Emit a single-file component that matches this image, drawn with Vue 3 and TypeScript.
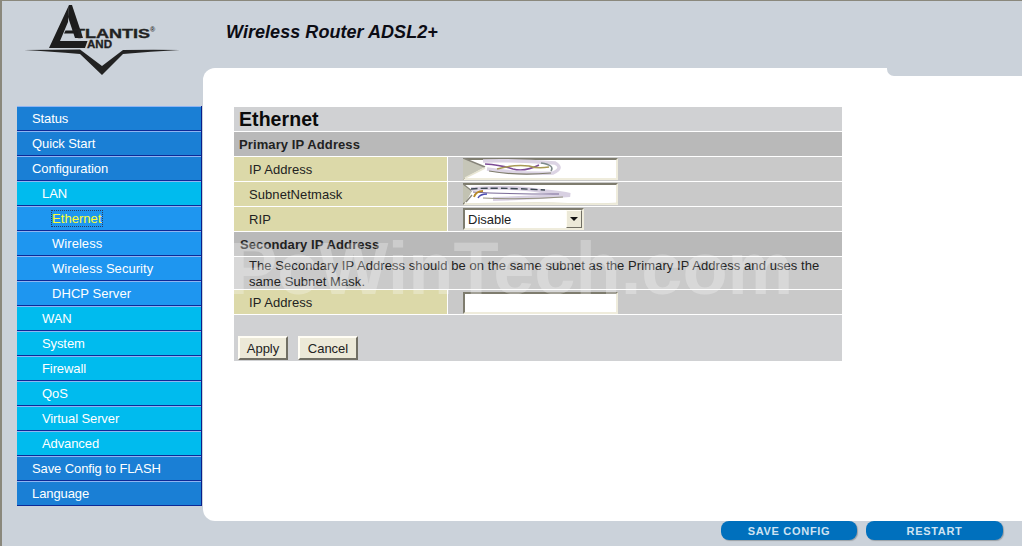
<script setup lang="ts">
interface MenuItem { label: string; level: 'top' | 'mid' | 'sub'; active?: boolean }
const menu: MenuItem[] = [
  { label: 'Status', level: 'top' },
  { label: 'Quick Start', level: 'top' },
  { label: 'Configuration', level: 'top' },
  { label: 'LAN', level: 'mid' },
  { label: 'Ethernet', level: 'sub', active: true },
  { label: 'Wireless', level: 'sub' },
  { label: 'Wireless Security', level: 'sub' },
  { label: 'DHCP Server', level: 'sub' },
  { label: 'WAN', level: 'mid' },
  { label: 'System', level: 'mid' },
  { label: 'Firewall', level: 'mid' },
  { label: 'QoS', level: 'mid' },
  { label: 'Virtual Server', level: 'mid' },
  { label: 'Advanced', level: 'mid' },
  { label: 'Save Config to FLASH', level: 'top' },
  { label: 'Language', level: 'top' }
]
</script>

<template>
  <div class="page">
    <header class="header">
      <svg class="logo" width="160" height="72" viewBox="24 4 160 72" aria-label="Atlantis Land logo">
        <path d="M69 5 L49 48 L85 48 L87.5 41 L60 41 L68 22 Z" fill="#1d1d1d" />
        <path d="M69 5 L72 5 L83 38 L75 38 L73.5 33.5 L64 33.5 L65.5 30.5 L72.5 30.5 L68 17 Z" fill="#1d1d1d" />
        <path d="M24 50 Q55 49.5 80 49.5 L102 66 L123 50 Q155 49.5 180 50 Q150 51.5 123 54 L102 75 L80 54 Q50 51.5 24 50 Z" fill="#222" />
        <text x="74" y="38" class="logo-main" textLength="76" lengthAdjust="spacingAndGlyphs">TLANTIS</text>
        <text x="150" y="32" class="logo-reg">®</text>
        <text x="87" y="48" class="logo-and" textLength="25" lengthAdjust="spacingAndGlyphs">AND</text>
      </svg>
      <h1 class="product">Wireless Router ADSL2+</h1>
    </header>

    <div class="main">
      <nav class="sidebar">
        <a
          v-for="item in menu"
          :key="item.label"
          class="item"
          :class="item.level"
        ><span :class="{ active: item.active }">{{ item.label }}</span></a>
      </nav>

      <section class="panel">
        <div class="sheet">
          <div class="row title"><h2>Ethernet</h2></div>
          <div class="row band">Primary IP Address</div>
          <div class="row pair">
            <div class="label">IP Address</div>
            <div class="value">
              <div class="field">
                <input type="text" />
                <svg class="smudge" width="155" height="22" viewBox="0 0 155 22">
                  <path d="M0 0 L22 9 L2 20 L0 22 Z" fill="#c6c6b8" />
                  <path d="M0 0 L22 9" stroke="#86847a" stroke-width="1.6" fill="none" />
                  <path d="M2 20 L22 10" stroke="#e8e6d4" stroke-width="1.5" fill="none" />
                  <path d="M20 3 Q55 2 92 5 Q101 10 90 15 Q55 16 24 11" stroke="#dcd4e4" stroke-width="3.5" fill="none" />
                  <path d="M22 6 Q38 7 50 11 Q62 14 76 7" stroke="#7c4b96" stroke-width="1.4" fill="none" />
                  <path d="M34 11 Q52 6 66 8 Q74 11 86 9" stroke="#a89a55" stroke-width="1.4" fill="none" />
                  <path d="M78 5 Q92 7 88 13" stroke="#7d8a8a" stroke-width="1.6" fill="none" />
                  <path d="M26 13 Q55 18 88 15" stroke="#7f7d6c" stroke-width="1.2" fill="none" />
                </svg>
              </div>
            </div>
          </div>
          <div class="row pair">
            <div class="label">SubnetNetmask</div>
            <div class="value">
              <div class="field">
                <input type="text" />
                <svg class="smudge" width="155" height="22" viewBox="0 0 155 22">
                  <path d="M0 1 L9 8 L3 19 L0 20 Z" fill="#c2c2b2" />
                  <path d="M0 1 L9 8 M3 19 L9 12" stroke="#86847a" stroke-width="1.3" fill="none" />
                  <path d="M8 6 Q50 3 78 8 Q100 10 107 12 Q70 15 30 16" stroke="#d8d0e2" stroke-width="4" fill="none" />
                  <path d="M8 6 Q30 4 82 7" stroke="#3c4752" stroke-width="1.4" stroke-dasharray="7 3" fill="none" />
                  <path d="M10 9 Q40 11 96 11" stroke="#7a6a98" stroke-width="1.1" fill="none" />
                  <path d="M11 14 Q13 8 20 8" stroke="#b88a2a" stroke-width="1.8" fill="none" />
                  <path d="M15 15 Q17 11 24 11" stroke="#4a4cb0" stroke-width="1.4" fill="none" />
                  <path d="M20 15 Q60 17 100 14" stroke="#94927f" stroke-width="1.1" fill="none" />
                  <path d="M3 21 Q70 19 95 20 Q125 22 155 20" stroke="#e9e7d6" stroke-width="1.2" fill="none" />
                </svg>
              </div>
            </div>
          </div>
          <div class="row pair">
            <div class="label">RIP</div>
            <div class="value">
              <div class="combo">
                <select><option>Disable</option></select>
                <span class="arrow"><i></i></span>
              </div>
            </div>
          </div>
          <div class="row band second">Secondary IP Address</div>
          <div class="row note">The Secondary IP Address should be on the same subnet as the Primary IP Address and uses the same Subnet Mask.</div>
          <div class="row pair">
            <div class="label">IP Address</div>
            <div class="value low">
              <div class="field"><input type="text" /></div>
            </div>
          </div>
          <div class="actions">
            <button type="button" class="apply">Apply</button>
            <button type="button" class="cancel">Cancel</button>
          </div>
        </div>
        <div class="watermark">PcWinTech.com</div>
      </section>
    </div>

    <footer class="footer">
      <button type="button" class="pill save">SAVE CONFIG</button>
      <button type="button" class="pill restart">RESTART</button>
    </footer>
  </div>
</template>

<style>
html, body { margin: 0; overflow: hidden; }
</style>

<style scoped>
.page {
  width: 1022px;
  height: 546px;
  box-sizing: border-box;
  background: #cbd2da;
  border-top: 1px solid #8a887c;
  border-left: 2px solid #8a887c;
  font-family: "Liberation Sans", Arial, sans-serif;
  font-size: 13px;
  color: #222;
  overflow: hidden;
}
.header {
  height: 67px;
  display: flex;
  padding-left: 22px;
}
.logo { margin-top: 3px; flex: none; }
.logo-main { font: 700 13px "Liberation Sans", sans-serif; fill: #222; stroke: #222; stroke-width: 0.35; }
.logo-reg { font: 700 7px "Liberation Sans", sans-serif; fill: #333; }
.logo-and { font: 700 10px "Liberation Sans", sans-serif; fill: #222; stroke: #222; stroke-width: 0.3; }
.product {
  margin: 20px 0 0 42px;
  font-size: 18px;
  line-height: 22px;
  font-weight: 700;
  font-style: italic;
  letter-spacing: 0.05px;
  color: #0c0c14;
}
.main { display: flex; height: 453px; }
.sidebar {
  width: 184px;
  margin: 38px 0 0 15px;
  flex: none;
  align-self: flex-start;
  border-right: 1px solid #0a1f8a;
  letter-spacing: -0.1px;
}
.item {
  display: block;
  height: 25px;
  box-sizing: border-box;
  border-top: 1px solid #8fb4f2;
  border-bottom: 1px solid #0d2a96;
  line-height: 23px;
  color: #fff;
}
.top { background: #1a7fd5; padding-left: 15px; }
.mid { background: #00bbee; padding-left: 25px; }
.sub { background: #1e96f0; padding-left: 35px; letter-spacing: 0.05px; }
.active { color: #ffff33; outline: 1px dotted #2a3a60; outline-offset: 0; }
.panel {
  position: relative;
  margin-left: 1px;
  flex: 1;
  background: #fff;
  border-radius: 12px 0 0 12px;
  padding: 39px 0 0 31px;
}
.panel::after {
  content: "";
  position: absolute;
  top: 0;
  right: 0;
  width: 135px;
  height: 8px;
  background: #cbd2da;
  border-bottom-left-radius: 7px;
}
.sheet { width: 608px; letter-spacing: 0.07px; }
.row { border-bottom: 1px solid #fff; box-sizing: border-box; }
.title {
  height: 25px;
  background: #d0d1d3;
  padding-left: 5px;
}
.title h2 {
  margin: 0;
  font-size: 19.5px;
  line-height: 24px;
  font-weight: 700;
  color: #0a0a0a;
}
.band {
  height: 25px;
  background: #b9b9b9;
  padding: 1px 0 0 5px;
  font-weight: 700;
  line-height: 24px;
  letter-spacing: 0.1px;
}
.second { padding-left: 6px; }
.pair { height: 25px; display: flex; }
.label {
  background: #dcd9a9;
  border-right: 1px solid #fff;
  padding: 1px 0 0 15px;
  line-height: 23px;
  flex: none;
  width: 198px;
}
.value {
  flex: 1;
  background: #c9c9c9;
  padding: 1px 0 0 15px;
}
.value.low { padding-top: 2px; }
.field { position: relative; width: 155px; height: 22px; }
.field input {
  display: block;
  width: 155px;
  height: 22px;
  box-sizing: border-box;
  margin: 0;
  padding: 0;
  background: #fff;
  border: 2px solid;
  border-color: #7e7c6e #efecdc #efecdc #7e7c6e;
  outline: none;
}
.smudge { position: absolute; left: 0; top: 0; pointer-events: none; }
.combo {
  display: flex;
  width: 121px;
  height: 22px;
  box-sizing: border-box;
  background: #fff;
  border: 2px solid;
  border-color: #7e7c6e #efecdc #efecdc #7e7c6e;
}
.combo select {
  appearance: none;
  flex: 1;
  min-width: 0;
  border: 0;
  padding: 0 0 0 3px;
  background: transparent;
  font: 13px "Liberation Sans", sans-serif;
  color: #222;
  outline: none;
}
.arrow {
  width: 16px;
  flex: none;
  background: #ece9d8;
  border: 1px solid;
  border-color: #fffdf4 #716f64 #716f64 #fffdf4;
  box-sizing: border-box;
  display: flex;
  align-items: center;
  justify-content: center;
}
.arrow i {
  border-left: 4px solid transparent;
  border-right: 4px solid transparent;
  border-top: 4px solid #111;
}
.note {
  height: 33px;
  background: #cacaca;
  padding: 1px 15px 0;
  line-height: 16px;
}
.actions {
  height: 46px;
  box-sizing: border-box;
  background: #d0d1d3;
  padding: 21px 0 0 4px;
  display: flex;
  gap: 10px;
}
.actions button {
  height: 24px;
  margin: 0;
  padding: 0;
  background: #ece9d8;
  border: 2px solid;
  border-color: #fffdf4 #716f64 #716f64 #fffdf4;
  font: 13px "Liberation Sans", sans-serif;
  color: #222;
}
.apply { width: 50px; }
.cancel { width: 60px; }
.watermark {
  position: absolute;
  left: 25px;
  top: 165px;
  font-size: 74px;
  line-height: 72px;
  font-weight: 700;
  color: rgba(255, 255, 255, 0.28);
  white-space: nowrap;
  pointer-events: none;
}
.footer {
  display: flex;
  justify-content: flex-end;
  gap: 9px;
  padding-right: 19px;
  height: 25px;
}
.pill {
  height: 19px;
  margin: 0;
  padding: 0;
  border: 0;
  border-radius: 8px;
  background: #0070bd;
  box-shadow: 1px 1px 1px #9aa0a6;
  color: #cfe3f2;
  font: 700 11px "Liberation Sans", sans-serif;
  letter-spacing: 0.7px;
}
.save { width: 136px; }
.restart { width: 137px; }
</style>
